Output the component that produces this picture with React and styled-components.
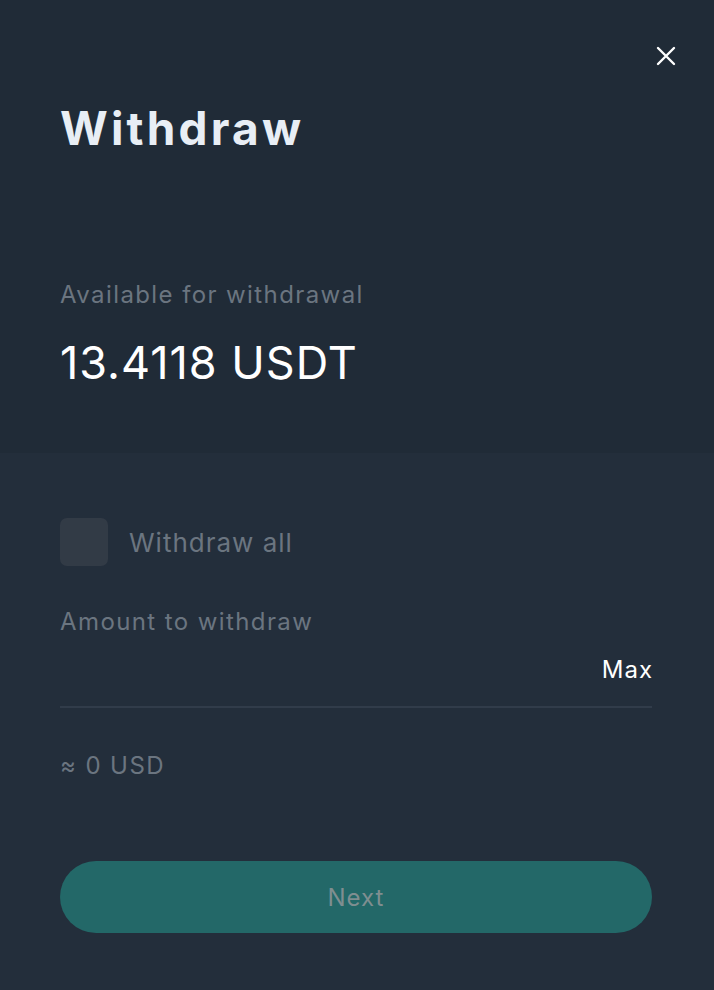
import React from 'react'
import styled, { createGlobalStyle } from 'styled-components'

const COLORS = {
  top: '#202b37',
  bottom: '#232e3b',
  white: '#ffffff',
  title: '#e8eef5',
  muted: '#6b7580',
  box: '#323b46',
  line: '#313c4a',
  button: '#236868',
  buttonText: '#7f8e90',
}

const GlobalStyle = createGlobalStyle`
  html, body {
    margin: 0;
    padding: 0;
    background: ${COLORS.bottom};
  }
  body {
    font-family: Inter, "Noto Sans", sans-serif;
  }
`

const Modal = styled.div`
  width: 714px;
  height: 990px;
  display: flex;
  flex-direction: column;
  background-color: ${COLORS.bottom};
`

const Summary = styled.section`
  height: 453px;
  box-sizing: border-box;
  background-color: ${COLORS.top};
  padding: 40px 60px 0;
  display: flex;
  flex-direction: column;
`

const CloseRow = styled.div`
  display: flex;
  justify-content: flex-end;
  margin-right: -28px;
`

const CloseButton = styled.button`
  width: 32px;
  height: 32px;
  padding: 0;
  border: none;
  background: transparent;
  display: flex;
  align-items: center;
  justify-content: center;
  cursor: pointer;
`

const Title = styled.h1`
  margin: 28px 0 0;
  font-size: 46px;
  line-height: 56px;
  font-weight: 700;
  color: ${COLORS.title};
  letter-spacing: 3.2px;
`

const Label = styled.div`
  font-size: ${(p) => p.size || 24}px;
  line-height: 32px;
  letter-spacing: 1.4px;
  color: ${COLORS.muted};
  margin-top: ${(p) => p.top || 0}px;
`

const Balance = styled.div`
  margin-top: 24px;
  font-size: 45px;
  line-height: 56px;
  font-weight: 400;
  letter-spacing: 1px;
  color: ${COLORS.white};
`

const Form = styled.section`
  flex: 1;
  padding: 65px 62px 0 60px;
  display: flex;
  flex-direction: column;
`

const CheckRow = styled.label`
  display: flex;
  align-items: center;
  gap: 21px;
  cursor: pointer;
`

const CheckBox = styled.span`
  width: 48px;
  height: 48px;
  border-radius: 7px;
  background-color: ${COLORS.box};
`

const CheckText = styled.span`
  font-size: 26px;
  letter-spacing: 1px;
  color: ${COLORS.muted};
`

const InputRow = styled.div`
  display: flex;
  align-items: center;
  justify-content: flex-end;
  height: 70px;
  box-sizing: border-box;
  padding-bottom: 5px;
  border-bottom: 2px solid ${COLORS.line};
`

const MaxButton = styled.button`
  border: none;
  background: transparent;
  padding: 0;
  margin-right: -1px;
  font-family: inherit;
  font-size: 24px;
  letter-spacing: 1px;
  color: ${COLORS.white};
  cursor: pointer;
`

const NextButton = styled.button`
  margin-top: 79px;
  height: 72px;
  border: none;
  border-radius: 36px;
  background-color: ${COLORS.button};
  color: ${COLORS.buttonText};
  font-family: inherit;
  font-size: 24px;
  letter-spacing: 1px;
  cursor: pointer;
`

const App = () => (
  <>
    <GlobalStyle />
    <Modal>
      <Summary>
        <CloseRow>
          <CloseButton aria-label="Close">
            <svg width="20" height="20" viewBox="0 0 20 20">
              <path d="M2 2L18 18M18 2L2 18" stroke="#fff" strokeWidth="2.4" strokeLinecap="round" />
            </svg>
          </CloseButton>
        </CloseRow>
        <Title>Withdraw</Title>
        <Label top={123}>Available for withdrawal</Label>
        <Balance>13.4118 USDT</Balance>
      </Summary>
      <Form>
        <CheckRow>
          <CheckBox />
          <CheckText>Withdraw all</CheckText>
        </CheckRow>
        <Label top={40}>Amount to withdraw</Label>
        <InputRow>
          <MaxButton>Max</MaxButton>
        </InputRow>
        <Label top={42}>≈ 0 USD</Label>
        <NextButton>Next</NextButton>
      </Form>
    </Modal>
  </>
)

export default App
